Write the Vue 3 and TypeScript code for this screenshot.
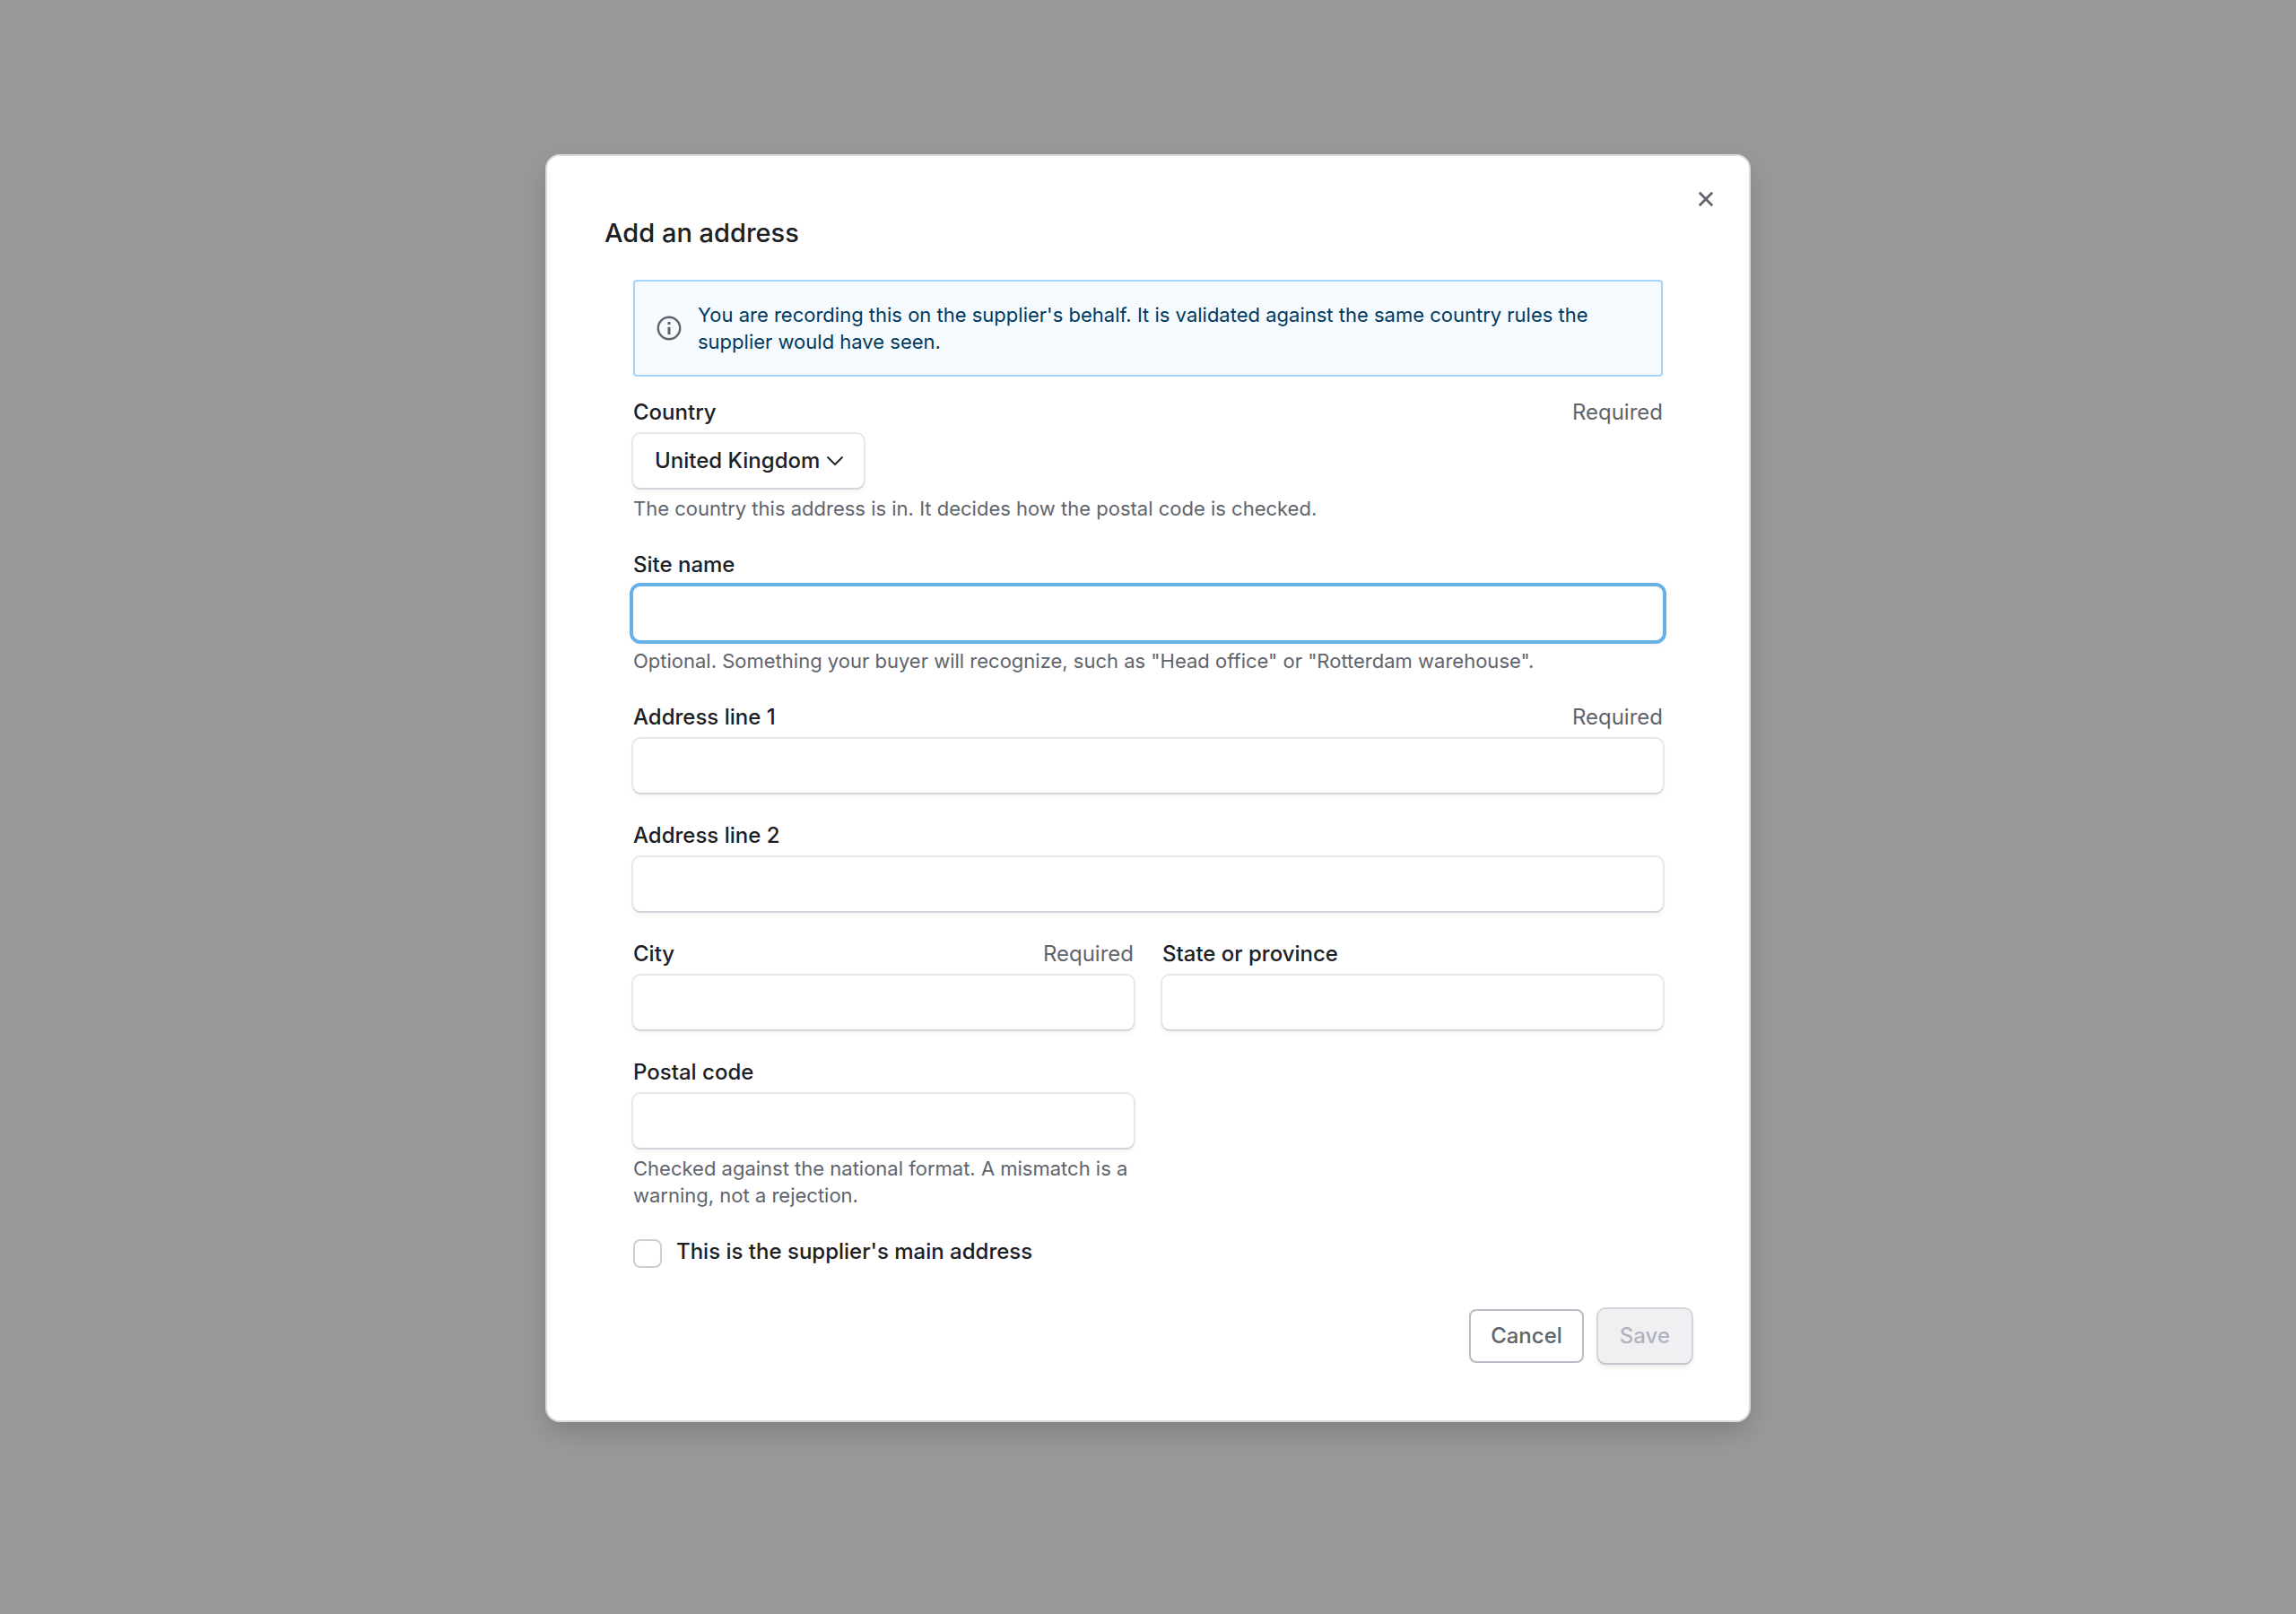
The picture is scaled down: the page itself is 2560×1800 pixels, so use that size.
<script setup lang="ts">
import { reactive } from 'vue'

const countries: string[] = ['United Kingdom']

const form = reactive({
  country: 'United Kingdom',
  siteName: '',
  line1: '',
  line2: '',
  city: '',
  state: '',
  postalCode: '',
  main: false,
})
</script>

<template>
  <div class="backdrop">
    <form class="modal" role="dialog" aria-labelledby="dialog-title" @submit.prevent>
      <button class="close" type="button" aria-label="Close">
        <svg viewBox="0 0 20 20" width="20" height="20" fill="none" stroke="currentColor" stroke-width="2.8">
          <path d="M2.8 2.8 17.2 17.2M17.2 2.8 2.8 17.2" />
        </svg>
      </button>

      <h1 id="dialog-title" class="title">Add an address</h1>

      <div class="body">
        <div class="callout">
          <svg class="info" viewBox="0 0 28 28" width="28" height="28" fill="none" stroke="currentColor">
            <circle cx="14" cy="14" r="12.2" stroke-width="2.4" />
            <path d="M14 12.7v8.3M14 7v3" stroke-width="3" />
          </svg>
          <p class="callout-text">
            You are recording this on the supplier's behalf. It is validated against the same country rules the
            supplier would have seen.
          </p>
        </div>

        <div class="field">
          <div class="label-row">
            <label for="country">Country</label>
            <span class="required">Required</span>
          </div>
          <div class="select-wrap">
            <select id="country" v-model="form.country" class="control select">
              <option v-for="c in countries" :key="c">{{ c }}</option>
            </select>
            <svg class="chevron" viewBox="0 0 20 12" width="20" height="12" fill="none" stroke="currentColor" stroke-width="1.8" stroke-linecap="round" stroke-linejoin="round">
              <path d="M2 2l8 8 8-8" />
            </svg>
          </div>
          <p class="hint">The country this address is in. It decides how the postal code is checked.</p>
        </div>

        <div class="field">
          <div class="label-row"><label for="site">Site name</label></div>
          <input id="site" v-model="form.siteName" class="control focused" type="text" />
          <p class="hint">Optional. Something your buyer will recognize, such as "Head office" or "Rotterdam warehouse".</p>
        </div>

        <div class="field">
          <div class="label-row">
            <label for="line1">Address line 1</label>
            <span class="required">Required</span>
          </div>
          <input id="line1" v-model="form.line1" class="control" type="text" />
        </div>

        <div class="field">
          <div class="label-row"><label for="line2">Address line 2</label></div>
          <input id="line2" v-model="form.line2" class="control" type="text" />
        </div>

        <div class="grid">
          <div class="field">
            <div class="label-row">
              <label for="city">City</label>
              <span class="required">Required</span>
            </div>
            <input id="city" v-model="form.city" class="control" type="text" />
          </div>
          <div class="field">
            <div class="label-row"><label for="state">State or province</label></div>
            <input id="state" v-model="form.state" class="control" type="text" />
          </div>
          <div class="field">
            <div class="label-row"><label for="postal">Postal code</label></div>
            <input id="postal" v-model="form.postalCode" class="control" type="text" />
            <p class="hint">Checked against the national format. A mismatch is a warning, not a rejection.</p>
          </div>
        </div>

        <div class="check-row">
          <input id="main" v-model="form.main" class="checkbox" type="checkbox" />
          <label for="main">This is the supplier's main address</label>
        </div>
      </div>

      <footer class="footer">
        <button class="button cancel" type="button">Cancel</button>
        <button class="button save" type="submit" disabled>Save</button>
      </footer>
    </form>
  </div>
</template>

<style>
body {
  background: #999999;
}
</style>

<style scoped>
.backdrop {
  box-sizing: border-box;
  min-height: 100vh;
  padding: 172px 32px;
  background: #999999;
  color: #1c2024;
  font: 500 24px/32px Inter, "Liberation Sans", sans-serif;
}

.modal {
  position: relative;
  box-sizing: border-box;
  max-width: 1344px;
  margin: 0 auto;
  padding: 64px;
  border: 2px solid #d9d9e0;
  border-radius: 16px;
  background: #ffffff;
  box-shadow: 0 12px 32px -4px rgba(0, 0, 0, 0.2);
}

.close {
  position: absolute;
  top: 24px;
  right: 24px;
  display: flex;
  align-items: center;
  justify-content: center;
  width: 48px;
  height: 48px;
  padding: 0;
  border: 0;
  background: none;
  color: #60646c;
}

.title {
  margin: 0 0 30px;
  font-size: 29px;
  font-weight: 500;
  line-height: 44px;
}

.body {
  display: flex;
  flex-direction: column;
  gap: 32px;
  padding: 0 32px;
}

.callout {
  display: flex;
  align-items: center;
  gap: 18px;
  margin-bottom: -8px;
  padding: 22px 24px;
  border: 2px solid #a5d4f7;
  border-radius: 4px;
  background: #f5faff;
}

.info {
  flex: none;
  color: #60646c;
}

.callout-text,
.hint {
  margin: 0;
  font-size: 22px;
  font-weight: 400;
  line-height: 30px;
}

.callout-text {
  color: #003a60;
}

.field {
  display: flex;
  flex-direction: column;
  align-items: stretch;
  gap: 8px;
}

.label-row {
  display: flex;
  justify-content: space-between;
}

.required,
.hint {
  color: #60646c;
  font-weight: 400;
}

.control {
  box-sizing: border-box;
  width: 100%;
  height: 60px;
  padding: 0 24px;
  border: 0;
  border-radius: 8px;
  outline: 0;
  background: #ffffff;
  color: inherit;
  font: inherit;
  box-shadow: 0 2px 0 0 #d3d3db, 0 0 0 2px #e6e6eb, 0 4px 6px rgba(0, 0, 0, 0.05);
}

.focused {
  box-shadow: 0 0 0 4px #68b0e8, 0 6px 6px rgba(0, 0, 0, 0.05);
}

.select-wrap {
  position: relative;
  align-self: flex-start;
}

.select {
  width: auto;
  padding: 0 48px 0 24px;
  appearance: none;
}

.chevron {
  position: absolute;
  top: 24px;
  right: 22px;
  pointer-events: none;
}

.grid {
  display: grid;
  grid-template-columns: 1fr 1fr;
  gap: 32px;
}

.check-row {
  display: flex;
  align-items: flex-start;
  gap: 16px;
}

.checkbox {
  box-sizing: border-box;
  width: 32px;
  height: 32px;
  margin: 2px 0 0;
  border: 2px solid #cdced6;
  border-radius: 8px;
  background: #ffffff;
  appearance: none;
}

.footer {
  display: flex;
  justify-content: flex-end;
  gap: 16px;
  margin-top: 46px;
}

.button {
  box-sizing: border-box;
  height: 60px;
  padding: 0 24px;
  border: 0;
  border-radius: 8px;
  font: inherit;
}

.cancel {
  padding: 0 22px;
  border: 2px solid #b9bbc6;
  background: #ffffff;
  color: #60646c;
}

.save {
  background: #f0f0f3;
  color: #b1b3c0;
  box-shadow: 0 2px 0 0 #c4c4cc, 0 0 0 2px #d4d4da, 0 4px 6px rgba(0, 0, 0, 0.1);
}
</style>
